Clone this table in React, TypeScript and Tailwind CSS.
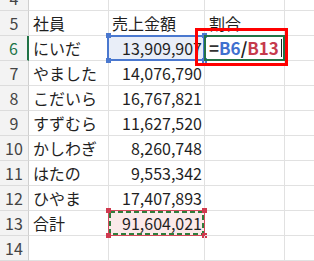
import React from "react";

const rows: { n: number; a: string; b: string }[] = [
  { n: 4, a: "", b: "" },
  { n: 5, a: "社員", b: "売上金額" },
  { n: 6, a: "にいだ", b: "13,909,907" },
  { n: 7, a: "やました", b: "14,076,790" },
  { n: 8, a: "こだいら", b: "16,767,821" },
  { n: 9, a: "すずむら", b: "11,627,520" },
  { n: 10, a: "かしわぎ", b: "8,260,748" },
  { n: 11, a: "はたの", b: "9,553,342" },
  { n: 12, a: "ひやま", b: "17,407,893" },
  { n: 13, a: "合計", b: "91,604,021" },
  { n: 14, a: "", b: "" },
];

const font = { fontFamily: '"Noto Sans CJK JP", "Noto Sans", sans-serif' };

function Corner({ pos, color }: { pos: string; color: string }) {
  return <div className={`absolute w-[5px] h-[5px] ${pos} ${color}`} />;
}

export default function App() {
  return (
    <div className="w-[314px] h-[261px] overflow-hidden bg-white text-[#1f1f1f] relative" style={font}>
      <div className="mt-[-14px] flex flex-col">
        {rows.map((r) => {
          const active = r.n === 6;
          const isB6 = r.n === 6;
          const isB13 = r.n === 13;
          const isHeader = r.n === 5;
          return (
            <div key={r.n} className="flex h-[25px]">
              <div
                className={`w-[29px] shrink-0 flex items-center justify-center text-[16px] bg-[#f3f3f3] border-b border-[#dcdcdc] ${
                  active ? "text-[#217346] border-r-2 border-r-[#217346]" : "text-[#444] border-r border-r-[#cfcfcf]"
                }`}
              >
                {r.n}
              </div>
              <div className="w-[80px] shrink-0 flex items-center pl-[4px] text-[16px] border-r border-b border-[#e1e1e1]">
                {r.a}
              </div>
              <div
                className={`w-[96px] shrink-0 relative flex items-center text-[16px] border-r border-b border-[#e1e1e1] ${
                  isHeader ? "pl-[3px] justify-start" : "pr-[2px] justify-end"
                } ${isB6 ? "bg-[#e9eef8]" : ""} ${isB13 ? "bg-[#fbe9e9]" : ""}`}
              >
                <span className="whitespace-nowrap overflow-hidden">{r.b}</span>
                {isB6 && (
                  <>
                    <div className="absolute left-[-2px] top-[-1px] right-[-1px] bottom-[-1px] border-2 border-[#4a78cf]" />
                    <Corner pos="left-[-3px] top-[-3px]" color="bg-[#4a78cf]" />
                    <Corner pos="right-[-3px] top-[-3px]" color="bg-[#4a78cf]" />
                    <Corner pos="left-[-3px] bottom-[-3px]" color="bg-[#4a78cf]" />
                    <Corner pos="right-[-3px] bottom-[-3px]" color="bg-[#4a78cf]" />
                  </>
                )}
                {isB13 && (
                  <>
                    <div className="absolute left-[-1px] top-[-1px] right-[-1px] bottom-[-1px] border border-[#d24a5c]" />
                    <svg className="absolute left-0 top-0" width="96" height="25">
                      <rect
                        x="1"
                        y="1"
                        width="93"
                        height="22"
                        fill="none"
                        stroke="#2f7d3c"
                        strokeWidth="2"
                        strokeDasharray="5 3"
                      />
                    </svg>
                    <Corner pos="left-[-3px] top-[-3px]" color="bg-[#d03a4f]" />
                    <Corner pos="right-[-3px] top-[-3px]" color="bg-[#d03a4f]" />
                    <Corner pos="left-[-3px] bottom-[-3px]" color="bg-[#d03a4f]" />
                    <Corner pos="right-[-3px] bottom-[-3px]" color="bg-[#d03a4f]" />
                  </>
                )}
              </div>
              <div className="w-[80px] shrink-0 relative flex items-center pl-[4px] text-[16px] border-r border-b border-[#e1e1e1]">
                {isHeader && "割合"}
                {isB6 && (
                  <>
                    <div className="absolute left-[-1px] top-[-1px] right-[-1px] bottom-[-1px] border-2 border-[#217346]" />
                    <span className="font-bold text-[17px] whitespace-nowrap relative">
                      <span className="text-[#333]">=</span>
                      <span className="text-[#3f70cf]">B6</span>
                      <span className="text-[#222]">/</span>
                      <span className="text-[#c53a4c]">B13</span>
                    </span>
                    <div className="absolute right-[2px] top-[3px] bottom-[3px] w-[1px] bg-[#222]" />
                  </>
                )}
              </div>
              <div className="flex-1 border-b border-[#e1e1e1]" />
            </div>
          );
        })}
      </div>
      <div className="absolute left-[195px] top-[28px] w-[93px] h-[38px] border-[3px] border-[#ff0000]" />
    </div>
  );
}
